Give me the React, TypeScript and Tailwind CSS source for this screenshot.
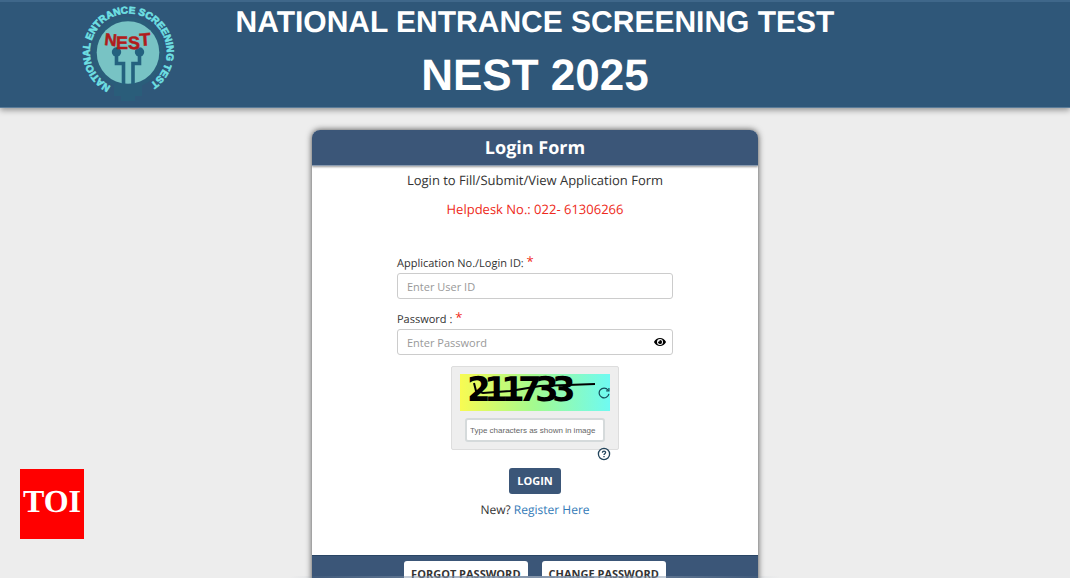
import { useState } from 'react'
import { FaEye } from 'react-icons/fa'

function NestLogo() {
  return (
    <svg viewBox="0 0 96 100" className="h-[100px] w-24 overflow-visible" role="img" aria-label="NEST logo">
      <defs>
        <path id="ring" d="M30.8 84.3 A38.5 38.5 0 1 1 69.5 82.2" fill="none" />
      </defs>
      <circle cx="48" cy="50.5" r="36" fill="#2a5d7a" />
      <path d="M34 80 H62 V94 H55 V99 H41 V94 H34 Z" fill="#2a5d7a" />
      <circle cx="48" cy="50.5" r="31.3" fill="#78c3c4" />
      <g fill="none" stroke="#24627f" strokeWidth="3.6">
        <path d="M36.5 51 V61.5 H43.5 V82" />
        <path d="M59.5 51 V61.5 H53 V82" />
      </g>
      <circle cx="36.5" cy="50" r="4.7" fill="#24627f" />
      <circle cx="59.5" cy="50" r="4.7" fill="#24627f" />
      <g fill="#b01c1c" fontFamily="Liberation Sans, sans-serif" fontWeight="700" stroke="#b01c1c" strokeWidth="0.5">
        <text x="24" y="43" fontSize="17" transform="rotate(6 24 43)">N</text>
        <text x="36" y="46.5" fontSize="18">E</text>
        <text x="48" y="46.5" fontSize="18">S</text>
        <text x="60" y="44" fontSize="18" transform="rotate(-4 60 44)">T</text>
      </g>
      <text fill="#6fe0e4" fontFamily="Liberation Sans, sans-serif" fontWeight="700" fontSize="10" stroke="#6fe0e4" strokeWidth="0.6">
        <textPath href="#ring">NATIONAL ENTRANCE SCREENING TEST</textPath>
      </text>
    </svg>
  )
}

const digits = ['2', '1', '1', '7', '3', '3']

function CaptchaImage() {
  return (
    <svg viewBox="0 0 150 37" className="block h-[37px] w-[150px] overflow-visible" role="img" aria-label="Captcha 211733">
      <defs>
        <linearGradient id="captcha" x1="0" y1="0" x2="1" y2="0">
          <stop offset="0" stopColor="#f8fb52" />
          <stop offset="0.5" stopColor="#a2fb90" />
          <stop offset="1" stopColor="#6ffaf2" />
        </linearGradient>
      </defs>
      <rect width="150" height="37" fill="url(#captcha)" />
      <g fontFamily="DejaVu Sans, sans-serif" fontWeight="700" fontSize="34" fill="#000">
        {digits.map((digit, i) => (
          <text key={i} x={7 + i * 17} y="27">{digit}</text>
        ))}
      </g>
      <path d="M14 9 L16 17 L23 19 L50 17 L80 12 L135 10" fill="none" stroke="#000" strokeWidth="2" />
    </svg>
  )
}

function Required() {
  return <span className="align-top text-[13px] leading-3 text-[#f02a20]">*</span>
}

export default function App() {
  const [visible, setVisible] = useState(false)
  return (
    <div className="relative h-screen overflow-hidden bg-[#ededed] font-['Open_Sans',sans-serif] text-[#333] [text-rendering:geometricPrecision]">
      <header className="grid h-[108px] grid-cols-[1fr_auto_1fr] border-t-2 border-b border-t-[#3f678a] border-b-[#5b7c99] bg-[#2f5779] shadow-[0_2px_6px_rgba(0,0,0,0.4)]">
        <div className="pl-20">
          <NestLogo />
        </div>
        <div className="pt-[5px] text-center font-['Liberation_Sans',sans-serif] font-bold text-white">
          <h1 className="text-[30px] leading-8">NATIONAL ENTRANCE SCREENING TEST</h1>
          <h2 className="mt-3 text-[44px] leading-[50px]">NEST 2025</h2>
        </div>
      </header>

      <main className="mx-auto mt-[22px] w-full max-w-[446px] overflow-hidden rounded-t-lg bg-white shadow-[0_0_6px_rgba(0,0,0,0.7)]">
        <h2 className="h-9 border-b border-[#8a9bb0] bg-[#3b5678] text-center text-lg leading-9 font-bold text-white shadow-[0_1px_2px_rgba(0,0,0,0.4)]">
          Login Form
        </h2>
        <div className="text-center text-[13px] leading-[29px]">
          <p>Login to Fill/Submit/View Application Form</p>
          <p className="text-[#ee2a20]">Helpdesk No.: 022- 61306266</p>
        </div>

        <form className="mx-auto flex max-w-[276px] flex-col pt-[31px] text-[11px]" onSubmit={(e) => e.preventDefault()}>
          <label htmlFor="login" className="h-[18px] leading-[18px]">
            Application No./Login ID: <Required />
          </label>
          <input
            id="login"
            placeholder="Enter User ID"
            className="h-[26px] w-full rounded-[3px] border border-[#ccc] px-[9px] placeholder:text-[#999]"
          />
          <label htmlFor="password" className="mt-3 h-[18px] leading-[18px]">
            Password : <Required />
          </label>
          <div className="flex h-[26px] items-center rounded-[3px] border border-[#ccc]">
            <input
              id="password"
              type={visible ? 'text' : 'password'}
              placeholder="Enter Password"
              className="h-full min-w-0 flex-1 px-[9px] placeholder:text-[#999]"
            />
            <button type="button" aria-label="Show password" className="px-[6px] text-black" onClick={() => setVisible(!visible)}>
              <FaEye size={12} />
            </button>
          </div>

          <div className="relative mx-auto mt-[11px] flex h-[84px] w-[168px] flex-col items-center rounded-[2px] border border-[#ddd] bg-[#eee] pt-[7px]">
            <CaptchaImage />
            <button type="button" aria-label="Refresh captcha" className="absolute top-5 right-2">
              <svg viewBox="0 0 12 12" className="size-3" fill="none" stroke="#164d5a" strokeWidth="1.2">
                <path d="M10 3 A4.9 4.9 0 1 0 10.9 6.8" />
                <path d="M10.900 1 V3.800 H8.200" />
              </svg>
            </button>
            <input
              aria-label="Captcha"
              placeholder="Type characters as shown in image"
              className="mt-[7px] h-6 w-[140px] rounded-[3px] border-2 border-[#d5dadb] bg-white px-[3px] font-['Liberation_Sans',sans-serif] text-[8px] placeholder:text-[#666]"
            />
          </div>
          <div className="relative mx-auto flex h-[18px] w-[168px] items-start justify-end pr-2">
            <button type="button" aria-label="Help" className="-mt-[3px]">
              <svg viewBox="0 0 14 14" className="size-[14px]" fill="none" stroke="#23455c" strokeWidth="1.3">
                <circle cx="7" cy="7" r="5.6" />
                <path d="M5.4 5.7 C5.4 3.5 8.7 3.6 8.6 5.6 C8.6 6.7 7 6.8 7 8" />
                <path d="M7 9 V10.3" />
              </svg>
            </button>
          </div>
          <button type="submit" className="mx-auto h-[26px] rounded-[3px] bg-[#3b5678] px-2 text-[11px] font-bold text-white">
            LOGIN
          </button>
          <p className="mt-[6px] text-center text-xs leading-5">
            New? <a href="#register" className="text-[#337ab7]">Register Here</a>
          </p>
        </form>

        <footer className="mt-[35px] flex justify-center gap-[14px] border-t border-[#294565] bg-[#3b5678] pt-[5px] pb-2">
          <button type="button" className="h-[26px] rounded-[3px] bg-white px-[7px] text-[11px] font-bold">FORGOT PASSWORD</button>
          <button type="button" className="h-[26px] rounded-[3px] bg-white px-[7px] text-[11px] font-bold">CHANGE PASSWORD</button>
        </footer>
      </main>

      <div className="absolute bottom-0 left-1/2 h-0.5 w-[490px] -translate-x-1/2 bg-linear-to-r from-transparent via-[#8495ab] to-transparent" />

      <a href="#toi" className="absolute bottom-[39px] left-5 flex h-[70px] w-16 items-start justify-center bg-[#ff0000] pt-[14px] font-['Liberation_Serif',serif] text-[32px] leading-9 font-bold text-white">
        TOI
      </a>
    </div>
  )
}
